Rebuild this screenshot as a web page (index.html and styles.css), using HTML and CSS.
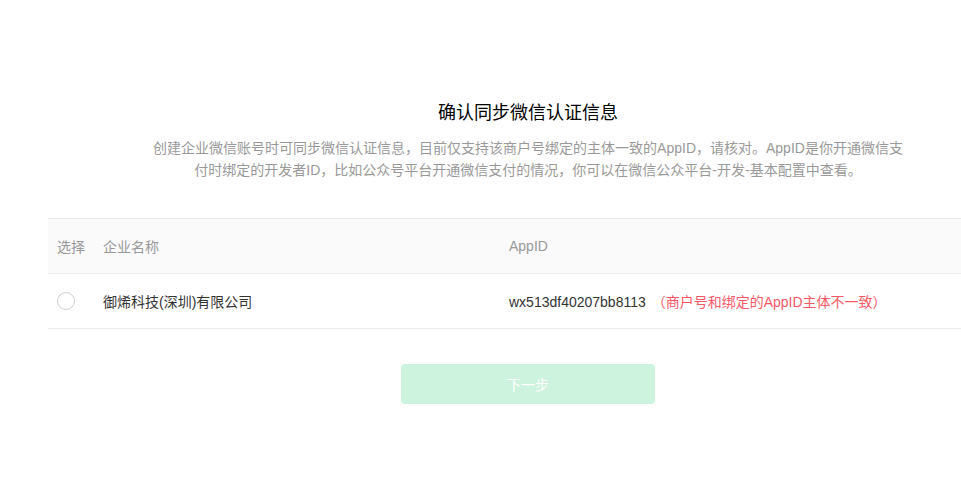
FILE: index.html
```html
<!DOCTYPE html>
<html lang="zh-CN">
<head>
   <meta charset="UTF-8">
   <meta name="viewport" content="width=device-width">
   <title>确认同步微信认证信息</title>
   <link rel="stylesheet" href="styles.css">
</head>
<body>
   <div class="page">
       <h1 class="title">确认同步微信认证信息</h1>
       <p class="intro">创建企业微信账号时可同步微信认证信息，目前仅支持该商户号绑定的主体一致的AppID，请核对。AppID是你开通微信支付时绑定的开发者ID，比如公众号平台开通微信支付的情况，你可以在微信公众平台-开发-基本配置中查看。</p>

       <table class="sync-table">
           <thead>
               <tr>
                   <th class="col-select">选择</th>
                   <th class="col-name">企业名称</th>
                   <th>AppID</th>
               </tr>
           </thead>
           <tbody>
               <tr>
                   <td class="col-select"><span class="radio"></span></td>
                   <td class="col-name">御烯科技(深圳)有限公司</td>
                   <td>wx513df40207bb8113 <span class="warn">（商户号和绑定的AppID主体不一致）</span></td>
               </tr>
           </tbody>
       </table>

       <div class="actions">
           <button class="btn-next" disabled>下一步</button>
       </div>
   </div>
</body>
</html>
```

FILE: styles.css
```css
body {
    margin: 0;
    font-family: "Liberation Sans", "Noto Sans CJK SC", sans-serif;
    color: #333;
    background: #fff;
    overflow: hidden;
}
.page {
    width: 960px;
    margin-left: 48px;
    padding-top: 99px;
}
.title {
    margin: 0;
    font-size: 18px;
    font-weight: normal;
    line-height: 28px;
    color: #000;
    text-align: center;
}
.intro {
    width: 760px;
    margin: 10px auto 0;
    font-size: 14px;
    line-height: 22px;
    color: #999;
    text-align: center;
}
.sync-table {
    width: 100%;
    margin-top: 37px;
    border-collapse: collapse;
    font-size: 14px;
}
.sync-table th,
.sync-table td {
    height: 54px;
    padding: 0;
    text-align: left;
    font-weight: normal;
    border-top: 1px solid #ebebeb;
    border-bottom: 1px solid #ebebeb;
}
.sync-table th {
    background: #fafafa;
    color: #999;
}
.sync-table td { color: #333; }
.sync-table th.col-select,
.sync-table td.col-select {
    padding-left: 9px;
    width: 46px;
}
.col-name {
    width: 406px;
}
.radio {
    display: block;
    width: 16px;
    height: 16px;
    border: 1px solid #d0d0d0;
    border-radius: 50%;
}
.warn {
    color: #f95866;
    margin-left: 2px;
}
.actions {
    width: 254px;
    margin: 35px 0 0 353px;
}
.btn-next {
    width: 254px;
    height: 40px;
    border: none;
    border-radius: 4px;
    background: #cdf2dd;
    color: #fff;
    font-family: inherit;
    font-size: 14px;
}
```
